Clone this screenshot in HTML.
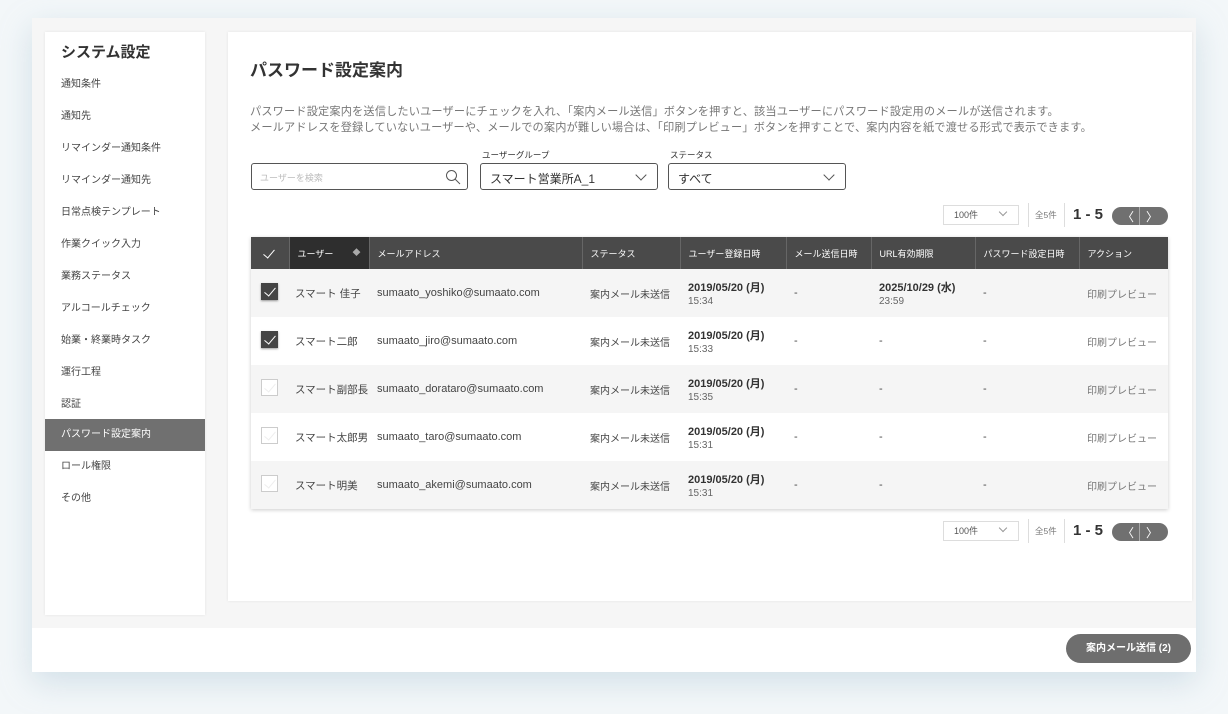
<!DOCTYPE html><html><head><meta charset="utf-8"><style>
*{box-sizing:border-box;margin:0;padding:0}
body{width:1228px;height:714px;background:#f3f7f9;font-family:"Liberation Sans","Noto Sans CJK JP",sans-serif;color:#333;position:relative;overflow:hidden}
.frame{position:absolute;left:32px;top:18px;width:1164px;height:654px;background:#f6f6f6;box-shadow:0 10px 30px rgba(150,180,200,.35)}
.side{position:absolute;left:45px;top:32px;width:160px;height:583px;background:#fff;box-shadow:0 0 3px rgba(0,0,0,.08)}
.side h2{position:absolute;left:16px;top:9px;font-size:15px;font-weight:bold;color:#333}
.side .it{position:absolute;left:0;width:160px;height:32px;line-height:32px;padding-left:16px;font-size:10px;color:#444}
.side .act{background:#707070;color:#fff}
.main{position:absolute;left:228px;top:32px;width:964px;height:569px;background:#fff;box-shadow:0 0 3px rgba(0,0,0,.08)}
.abs{position:absolute}
.desc{left:22px;top:72px;font-size:11.2px;color:#777;line-height:16px;white-space:nowrap;letter-spacing:.15px}
.box{border:1px solid #555;border-radius:3px;height:27px;background:#fff}
.chev{position:absolute;width:8px;height:8px;border-right:1px solid #555;border-bottom:1px solid #555;transform:rotate(45deg)}
.lbl{font-size:8.5px;color:#333}
table{position:absolute;left:251px;top:237px;border-collapse:collapse;width:917px;box-shadow:0 1px 4px rgba(0,0,0,.2);table-layout:fixed}
th{background:#4a4a4a;color:#fff;font-weight:normal;font-size:9px;text-align:left;height:32px;padding-left:8px;border-right:1px solid #666;white-space:nowrap}
th.u{background:#2e2e2e}
td{height:48px;font-size:11px;color:#444;padding-left:8px;white-space:nowrap;overflow:hidden}
td.n{font-size:10.5px;padding-left:6px}
tr.g td{background:#f5f5f5}
tr.w td{background:#fff}
td b{font-weight:bold;font-size:11px;color:#333}
td small{font-size:10px;color:#666}
.cb{width:17px;height:17px;border:1px solid #ccc;background:#fff;display:inline-block;margin-left:2px;position:relative}
.cb.on{background:#444;border-color:#444;box-shadow:0 1px 2px rgba(0,0,0,.4)}
.cb.on:after,.hc:after{content:"";position:absolute;left:5px;top:1px;width:5px;height:10px;border-right:1.5px solid #fff;border-bottom:1.5px solid #fff;transform:rotate(40deg)}
.cb.off:after{content:"";position:absolute;left:5px;top:1px;width:5px;height:10px;border-right:1px solid #eee;border-bottom:1px solid #eee;transform:rotate(40deg)}
.sel{position:absolute;width:76px;height:20px;border:1px solid #ddd;font-size:9px;color:#555;line-height:18px;padding-left:10px}
.nav{position:absolute;width:56px;height:18px;border-radius:9px;background:#707070;color:#fff;font-size:12px}
.btn{position:absolute;left:1066px;top:634px;width:125px;height:29px;border-radius:15px;background:#6e6e6e;color:#fff;font-size:10px;font-weight:bold;text-align:center;line-height:29px}
</style></head><body>
<div class="frame"></div>
<div class="abs" style="left:32px;top:628px;width:1164px;height:44px;background:#fff"></div>
<div class="side"><h2>システム設定</h2>
<div class="it" style="top:37px">通知条件</div>
<div class="it" style="top:69px">通知先</div>
<div class="it" style="top:101px">リマインダー通知条件</div>
<div class="it" style="top:133px">リマインダー通知先</div>
<div class="it" style="top:165px">日常点検テンプレート</div>
<div class="it" style="top:197px">作業クイック入力</div>
<div class="it" style="top:229px">業務ステータス</div>
<div class="it" style="top:261px">アルコールチェック</div>
<div class="it" style="top:293px">始業・終業時タスク</div>
<div class="it" style="top:325px">運行工程</div>
<div class="it" style="top:357px">認証</div>
<div class="it act" style="top:387px">パスワード設定案内</div>
<div class="it" style="top:419px">ロール権限</div>
<div class="it" style="top:451px">その他</div>
</div>
<div class="main">
<div class="abs" style="left:22px;top:24px;font-size:17px;font-weight:bold;color:#333">パスワード設定案内</div>
<div class="abs desc">パスワード設定案内を送信したいユーザーにチェックを入れ、「案内メール送信」ボタンを押すと、該当ユーザーにパスワード設定用のメールが送信されます。<br>メールアドレスを登録していないユーザーや、メールでの案内が難しい場合は、「印刷プレビュー」ボタンを押すことで、案内内容を紙で渡せる形式で表示できます。</div>
</div>
<div class="abs box" style="left:251px;top:163px;width:217px"><span class="abs" style="left:8px;top:7px;font-size:9px;color:#bbb">ユーザーを検索</span>
<svg class="abs" style="left:193px;top:5px" width="16" height="16" viewBox="0 0 16 16"><circle cx="6.5" cy="6.5" r="5" fill="none" stroke="#555" stroke-width="1"/><path d="M10 10l5 5" stroke="#555"/></svg></div>
<div class="abs lbl" style="left:482px;top:149px">ユーザーグループ</div>
<div class="abs box" style="left:480px;top:163px;width:178px"><span class="abs" style="left:9px;top:6px;font-size:12px;color:#333">スマート営業所A_1</span><span class="chev" style="left:156px;top:7px"></span></div>
<div class="abs lbl" style="left:670px;top:149px">ステータス</div>
<div class="abs box" style="left:668px;top:163px;width:178px"><span class="abs" style="left:9px;top:6px;font-size:12px;color:#333">すべて</span><span class="chev" style="left:156px;top:7px"></span></div>

<div class="sel" style="left:943px;top:205px">100件<span class="chev" style="left:56px;top:3px;width:6px;height:6px;border-color:#999"></span></div>
<div class="abs" style="left:1028px;top:203px;width:1px;height:24px;background:#ddd"></div>
<div class="abs" style="left:1035px;top:209px;font-size:8.5px;color:#777">全5件</div>
<div class="abs" style="left:1064px;top:203px;width:1px;height:24px;background:#ddd"></div>
<div class="abs" style="left:1073px;top:206px;font-size:15px;font-weight:bold;color:#333">1 - 5</div>
<div class="nav" style="left:1112px;top:207px"><span class="abs" style="left:10px;top:1px">&#x3008;</span><span class="abs" style="left:27px;top:0;width:1px;height:18px;background:#aaa"></span><span class="abs" style="left:34px;top:1px">&#x3009;</span></div>

<table>
<colgroup><col style="width:38px"><col style="width:80px"><col style="width:213px"><col style="width:98px"><col style="width:106px"><col style="width:85px"><col style="width:104px"><col style="width:104px"><col style="width:89px"></colgroup>
<tr><th style="position:relative"><span class="hc" style="position:absolute;left:10px;top:9px;width:16px;height:16px"></span></th><th class="u">ユーザー <span style="float:right;margin-right:8px;font-size:8px;color:#aaa">◆</span></th><th>メールアドレス</th><th>ステータス</th><th>ユーザー登録日時</th><th>メール送信日時</th><th>URL有効期限</th><th>パスワード設定日時</th><th style="border:0">アクション</th></tr>
<tr class="g"><td><span class="cb on"></span></td><td class="n">スマート 佳子</td><td>sumaato_yoshiko@sumaato.com</td><td style="font-size:10px">案内メール未送信</td><td><b>2019/05/20 (月)</b><br><small>15:34</small></td><td>-</td><td><b>2025/10/29 (水)</b><br><small>23:59</small></td><td>-</td><td style="font-size:10px;color:#777">印刷プレビュー</td></tr>
<tr class="w"><td><span class="cb on"></span></td><td class="n">スマート二郎</td><td>sumaato_jiro@sumaato.com</td><td style="font-size:10px">案内メール未送信</td><td><b>2019/05/20 (月)</b><br><small>15:33</small></td><td>-</td><td>-</td><td>-</td><td style="font-size:10px;color:#777">印刷プレビュー</td></tr>
<tr class="g"><td><span class="cb off"></span></td><td class="n">スマート副部長</td><td>sumaato_dorataro@sumaato.com</td><td style="font-size:10px">案内メール未送信</td><td><b>2019/05/20 (月)</b><br><small>15:35</small></td><td>-</td><td>-</td><td>-</td><td style="font-size:10px;color:#777">印刷プレビュー</td></tr>
<tr class="w"><td><span class="cb off"></span></td><td class="n">スマート太郎男</td><td>sumaato_taro@sumaato.com</td><td style="font-size:10px">案内メール未送信</td><td><b>2019/05/20 (月)</b><br><small>15:31</small></td><td>-</td><td>-</td><td>-</td><td style="font-size:10px;color:#777">印刷プレビュー</td></tr>
<tr class="g"><td><span class="cb off"></span></td><td class="n">スマート明美</td><td>sumaato_akemi@sumaato.com</td><td style="font-size:10px">案内メール未送信</td><td><b>2019/05/20 (月)</b><br><small>15:31</small></td><td>-</td><td>-</td><td>-</td><td style="font-size:10px;color:#777">印刷プレビュー</td></tr>
</table>

<div class="sel" style="left:943px;top:521px">100件<span class="chev" style="left:56px;top:3px;width:6px;height:6px;border-color:#999"></span></div>
<div class="abs" style="left:1028px;top:519px;width:1px;height:24px;background:#ddd"></div>
<div class="abs" style="left:1035px;top:525px;font-size:8.5px;color:#777">全5件</div>
<div class="abs" style="left:1064px;top:519px;width:1px;height:24px;background:#ddd"></div>
<div class="abs" style="left:1073px;top:522px;font-size:15px;font-weight:bold;color:#333">1 - 5</div>
<div class="nav" style="left:1112px;top:523px"><span class="abs" style="left:10px;top:1px">&#x3008;</span><span class="abs" style="left:27px;top:0;width:1px;height:18px;background:#aaa"></span><span class="abs" style="left:34px;top:1px">&#x3009;</span></div>

<div class="btn">案内メール送信 (2)</div>
</body></html>
